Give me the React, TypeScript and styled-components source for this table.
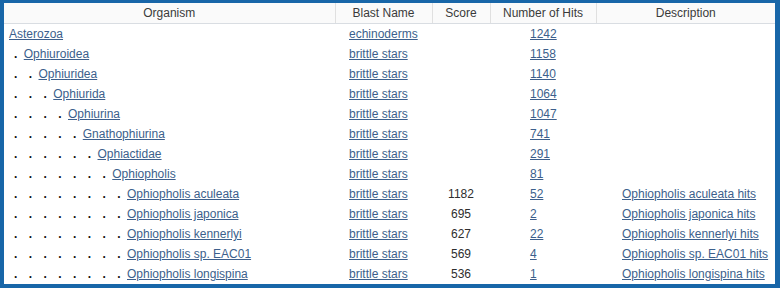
import React from "react";
import styled, { createGlobalStyle } from "styled-components";

interface TaxRow {
  name: string;
  level: number;
  blast: string;
  score?: number;
  hits: number;
  description?: string;
}

const rows: TaxRow[] = [
  { name: "Asterozoa", level: 0, blast: "echinoderms", hits: 1242 },
  { name: "Ophiuroidea", level: 1, blast: "brittle stars", hits: 1158 },
  { name: "Ophiuridea", level: 2, blast: "brittle stars", hits: 1140 },
  { name: "Ophiurida", level: 3, blast: "brittle stars", hits: 1064 },
  { name: "Ophiurina", level: 4, blast: "brittle stars", hits: 1047 },
  { name: "Gnathophiurina", level: 5, blast: "brittle stars", hits: 741 },
  { name: "Ophiactidae", level: 6, blast: "brittle stars", hits: 291 },
  { name: "Ophiopholis", level: 7, blast: "brittle stars", hits: 81 },
  {
    name: "Ophiopholis aculeata",
    level: 8,
    blast: "brittle stars",
    score: 1182,
    hits: 52,
    description: "Ophiopholis aculeata hits",
  },
  {
    name: "Ophiopholis japonica",
    level: 8,
    blast: "brittle stars",
    score: 695,
    hits: 2,
    description: "Ophiopholis japonica hits",
  },
  {
    name: "Ophiopholis kennerlyi",
    level: 8,
    blast: "brittle stars",
    score: 627,
    hits: 22,
    description: "Ophiopholis kennerlyi hits",
  },
  {
    name: "Ophiopholis sp. EAC01",
    level: 8,
    blast: "brittle stars",
    score: 569,
    hits: 4,
    description: "Ophiopholis sp. EAC01 hits",
  },
  {
    name: "Ophiopholis longispina",
    level: 8,
    blast: "brittle stars",
    score: 536,
    hits: 1,
    description: "Ophiopholis longispina hits",
  },
];

const columns = [
  { header: "Organism", width: 331 },
  { header: "Blast Name", width: 97 },
  { header: "Score", width: 58 },
  { header: "Number of Hits", width: 106 },
  { header: "Description", width: 179 },
];

const GlobalStyle = createGlobalStyle`
  html, body {
    margin: 0;
    padding: 0;
    background: #1866a8;
  }
  body {
    font-family: "Liberation Sans", Arial, sans-serif;
    font-size: 12px;
  }
`;

const Frame = styled.div`
  width: 780px;
  height: 288px;
  box-sizing: border-box;
  background: #1866a8;
  padding: 3px 5px 4px 4px;
`;

const Panel = styled.div`
  background: #ffffff;
  height: 100%;
  overflow: hidden;
`;

const Table = styled.table`
  border-collapse: collapse;
  border-spacing: 0;
  table-layout: fixed;
  width: 771px;
  font-size: 12px;
  color: #333333;
`;

const THead = styled.thead`
  background: #fafafa;
`;

const TH = styled.th`
  height: 20px;
  padding: 0;
  font-weight: normal;
  text-align: center;
  color: #3a3a3a;
  border-bottom: 1px solid #d9dde2;
  border-left: 1px solid #e0e0e0;

  &:first-child {
    border-left: none;
  }
`;

const TR = styled.tr`
  height: 20px;
`;

const TD = styled.td<{ $align?: "left" | "center"; $pad?: number }>`
  padding: 0 0 0 ${(p) => p.$pad ?? 0}px;
  text-align: ${(p) => p.$align ?? "left"};
  white-space: nowrap;
  vertical-align: middle;
  line-height: 20px;
  color: #2e2e2e;
`;

const Link = styled.a`
  color: #3c5f8c;
  text-decoration: underline;
  cursor: pointer;
`;

const Dot = styled.span`
  display: inline-block;
  width: 14.75px;
  box-sizing: border-box;
  padding-left: 5px;
  color: #111111;
  font-weight: bold;
`;

const Indent = ({ level }: { level: number }) => (
  <>
    {Array.from({ length: level }, (_, i) => (
      <Dot key={i}>.</Dot>
    ))}
  </>
);

const App = () => (
  <>
    <GlobalStyle />
    <Frame>
      <Panel>
        <Table>
          <colgroup>
            {columns.map((c) => (
              <col key={c.header} style={{ width: c.width }} />
            ))}
          </colgroup>
          <THead>
            <tr>
              {columns.map((c) => (
                <TH key={c.header}>{c.header}</TH>
              ))}
            </tr>
          </THead>
          <tbody>
            {rows.map((r) => (
              <TR key={r.name}>
                <TD $pad={5}>
                  <Indent level={r.level} />
                  <Link>{r.name}</Link>
                </TD>
                <TD $pad={14}>
                  <Link>{r.blast}</Link>
                </TD>
                <TD $align="center">{r.score ?? ""}</TD>
                <TD $pad={40}>
                  <Link>{r.hits}</Link>
                </TD>
                <TD $pad={26}>
                  {r.description && <Link>{r.description}</Link>}
                </TD>
              </TR>
            ))}
          </tbody>
        </Table>
      </Panel>
    </Frame>
  </>
);

export default App;
